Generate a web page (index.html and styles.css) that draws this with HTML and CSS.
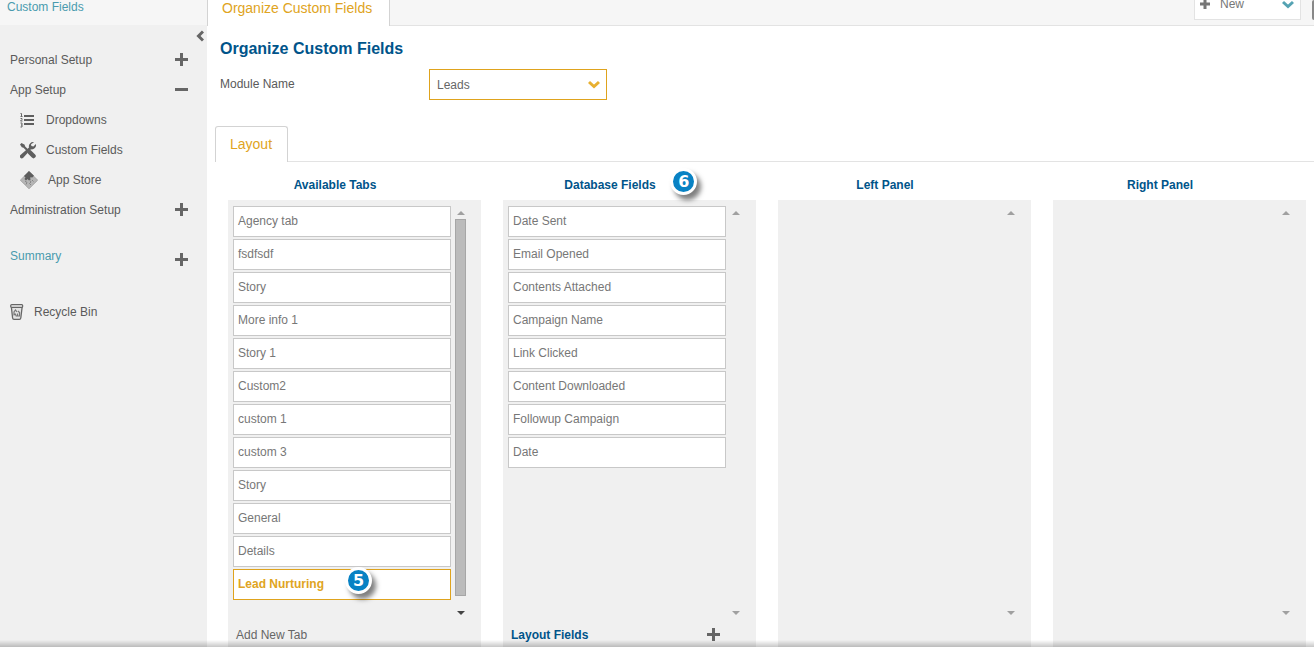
FILE: index.html
```html
<!DOCTYPE html>
<html lang="en">
<head>
    <meta charset="UTF-8">
    <meta name="viewport" content="width=device-width, initial-scale=1.0">
    <title>Organize Custom Fields</title>
    <link rel="stylesheet" href="styles.css">
</head>
<body>

<header class="topbar">
    <div class="section-name">Custom Fields</div>
    <div class="tabbar">
        <a class="page-tab" href="#">Organize Custom Fields</a>
        <button class="new-button" type="button">
            <svg width="10" height="9" viewBox="0 1 10 9"><path d="M3.500 0h3v3.500H10v3H6.500V10h-3V6.500H0v-3h3.500z" fill="#777"/></svg>
            <span>New</span>
            <svg class="new-arrow" width="12" height="9" viewBox="0 0 12 9"><path d="m1 2 5 4.500L11 2" fill="none" stroke="#55a3b3" stroke-width="3"/></svg>
        </button>
        <button class="edge-button" type="button" aria-label="More"></button>
    </div>
</header>

<div class="page">
    <nav class="sidebar">
        <button class="collapse" type="button" aria-label="Collapse menu">
            <svg width="8" height="12" viewBox="0 0 8 12"><path d="M7 1.500 2.500 6 7 10.500" fill="none" stroke="#666" stroke-width="3"/></svg>
        </button>
        <a class="nav-row" href="#">Personal Setup
            <svg width="13" height="14" viewBox="0 0 13 14"><path d="M5 0h3v5h5v3H8v5H5V8H0V5h5z" fill="#666"/></svg>
        </a>
        <a class="nav-row" href="#">App Setup
            <svg width="13" height="14" viewBox="0 0 13 14"><path d="M0 5h13v3H0z" fill="#666"/></svg>
        </a>
        <a class="nav-sub" href="#">
            <svg width="18" height="16" viewBox="0 0 18 16">
                <path d="M4 4h10M4 8h10M4 12h10" stroke="#5f5f5f" stroke-width="2"/>
                <path d="M.5 1.500h1v3M.5 4.500h2M.5 6.500h1.500v1L.5 9h2M.5 11h1.500v4H.5M1 13h1" fill="none" stroke="#666"/>
            </svg>
            Dropdowns
        </a>
        <a class="nav-sub" href="#">
            <svg width="18" height="18" viewBox="1 0 18 18">
                <path d="M1 3.500 2.500 2l3.200 1.700.3 1.500 3 3-1.500 1.500-3-3-1.700-.4z" fill="#5f5f5f"/>
                <path d="m11 11.500 3.500 3.500" stroke="#5f5f5f" stroke-width="4.500" stroke-linecap="round"/>
                <path d="M15 1.200a4.300 4.300 0 0 0-5 5.300L1.200 14.200a2 2 0 0 0 2.800 2.800l8-8.700a4.300 4.300 0 0 0 4.900-5.300l-2.500 2.600-2-.5-.4-1.900z" fill="#5f5f5f"/>
            </svg>
            Custom Fields
        </a>
        <a class="nav-sub" href="#">
            <svg class="wide-icon" width="18" height="18" viewBox="0 0 18 18">
                <path d="m9 .5 8.700 8.700L9 17.800.3 9.200z" fill="#b5b5b5" stroke="#999" stroke-width=".7"/>
                <path d="m9 0 5 4.800-2 2-1-.8-1 1 .8 1.200L9 9.500 7.500 8 6 9.500 4.500 8l1-1.500L4 5z" fill="#5d5d5d"/>
                <path d="m5 10 2 1.500-1 2m4-4 1 1.500-1.500 1.500L11 14m1-5 1.500 1.500" fill="none" stroke="#858585"/>
            </svg>
            App Store
        </a>
        <a class="nav-row" href="#">Administration Setup
            <svg width="13" height="14" viewBox="0 0 13 14"><path d="M5 0h3v5h5v3H8v5H5V8H0V5h5z" fill="#666"/></svg>
        </a>
        <a class="nav-row summary" href="#">Summary
            <svg width="13" height="13" viewBox="0 0 13 13"><path d="M5 0h3v5h5v3H8v5H5V8H0V5h5z" fill="#666"/></svg>
        </a>
        <a class="nav-bin" href="#">
            <svg width="14" height="16" viewBox="0 0 14 16">
                <path d="M1.300 2.500 2.600 14q.2 1.300 1.400 1.300h5.400q1.200 0 1.400-1.300L12.200 2.500" fill="#e4e4e4" stroke="#666" stroke-width="1.300"/>
                <rect x=".7" y=".7" width="12" height="2.600" rx="1" fill="#f0f0f0" stroke="#666" stroke-width="1.200"/>
                <path d="M4 11.500V8l1.500-2L7 8M5 9.500l1.500 3M8 7l1.500 1.500V12H7.500V9.500" fill="none" stroke="#777" stroke-width="1.200"/>
            </svg>
            Recycle Bin
        </a>
    </nav>

    <main class="content">
        <h1>Organize Custom Fields</h1>
        <div class="module">
            <label for="module">Module Name</label>
            <div class="select-box">
                <select id="module">
                    <option>Leads</option>
                </select>
                <svg class="select-arrow" width="12" height="9" viewBox="0 0 12 9"><path d="m1 2 5 4.500L11 2" fill="none" stroke="#e8b030" stroke-width="3"/></svg>
            </div>
        </div>

        <div class="layout-tabs">
            <a class="layout-tab" href="#">Layout</a>
        </div>

        <div class="columns">
            <section class="column">
                <h2>Available Tabs</h2>
                <div class="panel">
                    <div class="panel-body">
                        <ul class="fields">
                            <li>Agency tab</li>
                            <li>fsdfsdf</li>
                            <li>Story</li>
                            <li>More info 1</li>
                            <li>Story 1</li>
                            <li>Custom2</li>
                            <li>custom 1</li>
                            <li>custom 3</li>
                            <li>Story</li>
                            <li>General</li>
                            <li>Details</li>
                            <li class="selected">Lead Nurturing<span class="badge badge-five">5</span></li>
                        </ul>
                        <div class="scroll">
                            <span class="up"></span>
                            <span class="track thumb"></span>
                            <span class="down active"></span>
                        </div>
                    </div>
                    <div class="panel-foot">
                        <button class="add-tab" type="button">Add New Tab</button>
                    </div>
                </div>
            </section>

            <section class="column">
                <h2><span class="marked">Database Fields<span class="badge badge-six">6</span></span></h2>
                <div class="panel">
                    <div class="panel-body">
                        <ul class="fields">
                            <li>Date Sent</li>
                            <li>Email Opened</li>
                            <li>Contents Attached</li>
                            <li>Campaign Name</li>
                            <li>Link Clicked</li>
                            <li>Content Downloaded</li>
                            <li>Followup Campaign</li>
                            <li>Date</li>
                        </ul>
                        <div class="scroll">
                            <span class="up"></span>
                            <span class="track"></span>
                            <span class="down"></span>
                        </div>
                    </div>
                    <div class="panel-foot">
                        <h3>Layout Fields</h3>
                        <button class="add-field" type="button" aria-label="Add layout field">
                            <svg width="13" height="14" viewBox="0 0 13 14"><path d="M5 0h3v5h5v3H8v5H5V8H0V5h5z" fill="#666"/></svg>
                        </button>
                    </div>
                </div>
            </section>

            <section class="column">
                <h2>Left Panel</h2>
                <div class="panel">
                    <div class="panel-body">
                        <ul class="fields"></ul>
                        <div class="scroll">
                            <span class="up"></span>
                            <span class="track"></span>
                            <span class="down"></span>
                        </div>
                    </div>
                    <div class="panel-foot"></div>
                </div>
            </section>

            <section class="column">
                <h2>Right Panel</h2>
                <div class="panel">
                    <div class="panel-body">
                        <ul class="fields"></ul>
                        <div class="scroll">
                            <span class="up"></span>
                            <span class="track"></span>
                            <span class="down"></span>
                        </div>
                    </div>
                    <div class="panel-foot"></div>
                </div>
            </section>
        </div>
    </main>
</div>

<div class="bottom-shade"></div>

</body>
</html>
```
FILE: styles.css
```css
* {
    box-sizing: border-box;
}

body {
    margin: 0;
    min-height: 100vh;
    display: flex;
    flex-direction: column;
    font-family: "Liberation Sans", Arial, sans-serif;
    font-size: 12px;
    line-height: 20px;
    color: #5a5a5a;
    background-color: #fff;
}

a {
    color: inherit;
    text-decoration: none;
}

button {
    font: inherit;
    color: inherit;
    background: none;
    border: none;
    padding: 0;
    cursor: pointer;
}

svg {
    display: block;
    flex: none;
}

h1, h2, h3, ul {
    margin: 0;
    padding: 0;
}

/* top bar */
.topbar {
    display: flex;
    background-color: #f6f6f6;
}

.section-name {
    width: 207px;
    padding-left: 7px;
    line-height: 14px;
    color: #4a9bae;
    border-bottom: 1px solid #f0f0f0;
}

.tabbar {
    flex: 1;
    display: flex;
    align-items: flex-start;
    height: 26px;
    border-bottom: 1px solid #e3e3e3;
}

.page-tab {
    height: 26px;
    padding: 0 17px 0 14px;
    font-size: 14px;
    line-height: 16px;
    color: #e0a422;
    background-color: #fff;
    border: solid #d3d3d3;
    border-width: 0 1px;
}

.new-button {
    display: flex;
    align-items: flex-start;
    gap: 10px;
    width: 107px;
    height: 20px;
    margin-left: auto;
    padding: 0 6px 0 5px;
    line-height: 9px;
    color: #777;
    background-color: #fff;
    border: 1px solid #e3e3e3;
    border-top: none;
}

.new-arrow {
    margin-left: auto;
}

.edge-button {
    width: 2px;
    height: 20px;
    margin-left: 11px;
    background-color: #888;
    border-radius: 2px 0 0 2px;
}

/* sidebar */
.page {
    flex: 1;
    display: flex;
}

.sidebar {
    width: 207px;
    background-color: #f0f0f0;
}

.collapse {
    display: block;
    width: 8px;
    height: 19px;
    margin-left: 196px;
}

.nav-row {
    display: flex;
    align-items: center;
    justify-content: space-between;
    height: 30px;
    padding: 0 19px 0 10px;
}

.nav-sub {
    display: flex;
    align-items: center;
    gap: 8px;
    height: 30px;
    padding-left: 20px;
}

.wide-icon {
    margin-right: 2px;
}

.summary {
    align-items: flex-end;
    height: 20px;
    margin-top: 21px;
    color: #4a9bae;
}

.nav-bin {
    display: flex;
    align-items: center;
    gap: 10px;
    margin-top: 36px;
    padding-left: 10px;
}

/* content */
.content {
    flex: 1;
}

h1 {
    padding: 13px 13px 10px;
    font-size: 16px;
    color: #00548a;
}

.module {
    display: flex;
    padding-left: 13px;
    line-height: 30px;
}

.module label {
    width: 209px;
}

.select-box {
    position: relative;
    width: 178px;
}

.select-box select {
    display: block;
    width: 100%;
    height: 31px;
    padding: 0 7px 2px;
    font: inherit;
    color: #666;
    background-color: #fff;
    border: 1px solid #dfa31d;
    border-radius: 0;
    appearance: none;
}

.select-arrow {
    position: absolute;
    top: 11px;
    right: 7px;
    pointer-events: none;
}

.layout-tabs {
    display: flex;
    margin: 26px 0 0 8px;
    height: 36px;
    border-bottom: 1px solid #e3e3e3;
}

.layout-tab {
    height: 36px;
    padding: 0 15px 0 14px;
    font-size: 14px;
    line-height: 34px;
    color: #e0a422;
    background-color: #fff;
    border: 1px solid #d3d3d3;
    border-bottom: none;
    border-radius: 3px 3px 0 0;
}

/* field columns */
.columns {
    display: grid;
    grid-template-columns: repeat(4, 1fr);
    gap: 22px;
    padding: 13px 8px 0 21px;
}

.column {
    display: flex;
    flex-direction: column;
}

h2 {
    padding-right: 39px;
    margin-bottom: 5px;
    font-size: 12px;
    text-align: center;
    color: #00548a;
}

.panel {
    flex: 1;
    display: flex;
    flex-direction: column;
    background-color: #f0f0f0;
}

.panel-body {
    flex: 1;
    display: flex;
    gap: 4px;
    padding: 6px 15px 0 5px;
}

.fields {
    flex: 1;
    display: flex;
    flex-direction: column;
    gap: 2px;
    margin-bottom: 19px;
    list-style: none;
}

.fields li {
    position: relative;
    height: 31px;
    padding: 0 4px;
    line-height: 28px;
    color: #777;
    background-color: #fff;
    border: 1px solid #c8c8c8;
}

.fields .selected {
    font-weight: bold;
    color: #e0a422;
    border-color: #dfa31d;
}

.scroll {
    display: flex;
    flex-direction: column;
    align-items: center;
    width: 11px;
    padding: 5px 0 4px;
}

.up, .down {
    border: solid transparent;
    border-width: 0 4px;
}

.up {
    border-bottom: 4px solid #a0a0a0;
}

.down {
    border-top: 4px solid #a0a0a0;
}

.down.active {
    border-top-color: #444;
}

.track {
    flex: 1;
    width: 11px;
    margin: 4px 0 15px;
}

.thumb {
    background-color: #bbb;
    border: 1px solid #a6a6a6;
}

.panel-foot {
    display: flex;
    align-items: center;
    justify-content: space-between;
    height: 28px;
    padding: 4px 36px 0 8px;
}

.add-tab {
    color: #666;
}

h3 {
    font-size: 12px;
    color: #00548a;
}

/* step markers */
.marked {
    position: relative;
}

.badge {
    position: absolute;
    width: 27px;
    height: 27px;
    font-family: "DejaVu Sans", sans-serif;
    font-size: 16px;
    font-weight: bold;
    line-height: 21px;
    text-align: center;
    color: #fff;
    background-color: #0882c4;
    border: 3px solid #fff;
    border-radius: 50%;
    box-shadow: 4px 5px 5px rgba(0, 0, 0, 0.5);
}

.badge-five {
    top: -3px;
    left: 111px;
}

.badge-six {
    top: -10px;
    left: 106px;
}

.bottom-shade {
    position: fixed;
    right: 0;
    bottom: 0;
    left: 0;
    height: 7px;
    background: linear-gradient(rgba(0, 0, 0, 0), rgba(0, 0, 0, 0.22));
    pointer-events: none;
}
```
